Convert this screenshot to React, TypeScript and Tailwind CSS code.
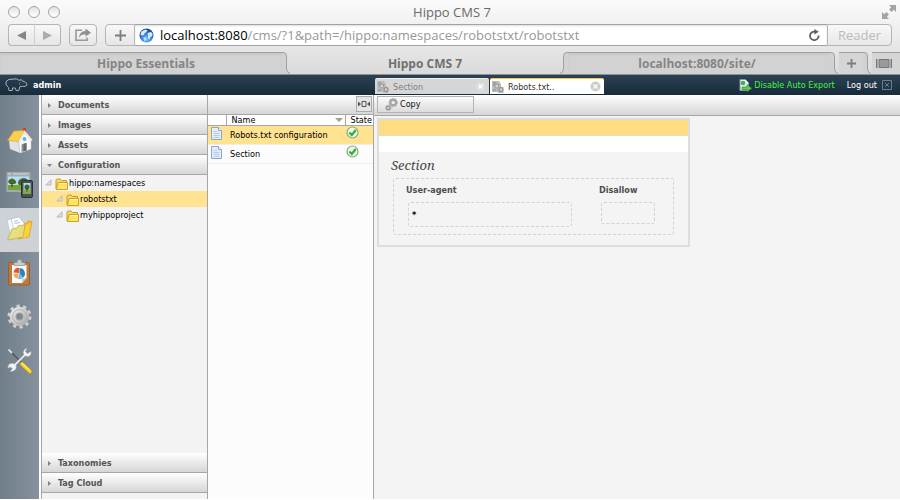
import React from "react";

const chromeFont = "font-['Open_Sans','Noto_Sans',sans-serif]";
const cmsFont = "font-['DejaVu_Sans_Condensed','DejaVu_Sans',sans-serif]";

/* ---------- browser window ---------- */

function ShareIcon() {
  return (
    <svg width="18" height="14" viewBox="0 0 18 14" fill="none" aria-hidden="true">
      <path d="M8 2.2H2v10h11V9.500" stroke="#999" strokeWidth="1.600" />
      <path d="M11.500 0.500L17 4.700L11.500 8.600V6.300C8.500 6.200 6.500 7.200 5 9.800C5.200 5.800 7.600 3.100 11.500 2.900Z" fill="#8f8f8f" />
    </svg>
  );
}

function GlobeIcon() {
  return (
    <svg width="15" height="15" viewBox="0 0 15 15" aria-hidden="true">
      <defs>
        <radialGradient id="globe" cx="0.5" cy="0.75" r="0.7">
          <stop offset="0" stopColor="#7cc6fb" />
          <stop offset="0.6" stopColor="#2f78d8" />
          <stop offset="1" stopColor="#173f8e" />
        </radialGradient>
      </defs>
      <circle cx="7.500" cy="7.500" r="7" fill="url(#globe)" />
      <path d="M2.500 3.500L6 1.500L8.500 2.300L7.300 4.300L5.500 5.200L4.800 7L3 7.400L1.500 6.500Z" fill="#d6ecff" />
      <path d="M8.600 5L12 4L13.800 6.200L12.600 8.400L11.300 9L10.400 11.600L8.800 9.500L9.200 7.500Z" fill="#d4ecff" />
      <path d="M4.500 9L7.300 9.700L6.800 12.300L5.400 13.200Z" fill="#bfe2fe" />
    </svg>
  );
}

function ToolbarButton({ label, className, children }: { label: string; className: string; children: React.ReactNode }) {
  return (
    <button
      type="button"
      aria-label={label}
      className={`flex h-[22px] items-center justify-center border border-[#b5b5b5] bg-gradient-to-b from-[#f8f8f8] to-[#e6e6e6] ${className}`}
    >
      {children}
    </button>
  );
}

function TabEdge({ flip = false }: { flip?: boolean }) {
  return (
    <svg width="9" height="22" viewBox="0 0 9 22" className={flip ? "-scale-x-100" : ""} aria-hidden="true">
      <path d="M0 0H1Q4.500 0.500 4.500 4V17Q4.500 20.500 8 22H0Z" fill="#d2d2d2" />
      <path d="M0 0.500H1Q4.500 0.500 4.500 4V17Q4.500 20.500 8 21.500" fill="none" stroke="#9f9f9f" />
    </svg>
  );
}

function BrowserChrome() {
  return (
    <div className={`${chromeFont} bg-gradient-to-b from-[#fbfbfb] via-[#ebebeb] to-[#dadada]`}>
      <div className="grid h-6 grid-cols-[1fr_auto_1fr] items-center pr-1 pl-2">
        <div className="flex gap-2">
          {["Close", "Minimize", "Zoom"].map((name) => (
            <button key={name} type="button" aria-label={name} className="size-3 rounded-full border border-[#a5a5a5] bg-gradient-to-b from-[#e2e2e2] to-white" />
          ))}
        </div>
        <h1 className="text-[13px] leading-6 text-[#6a6a6a]">Hippo CMS 7</h1>
        <button type="button" aria-label="Full screen" className="justify-self-end">
          <svg width="14" height="14" viewBox="0 0 14 14" fill="#a3a3a3">
            <path d="M7 0H14V7L11.800 4.800L9.500 7L7 4.600L9.200 2.300Z" />
            <path d="M0 7L2.200 9.200L4.400 7L7 9.500L4.800 11.700L7 14H0Z" />
          </svg>
        </button>
      </div>

      <div className="flex h-7 items-start px-2">
        <div className="flex">
          <ToolbarButton label="Back" className="w-[27px] rounded-l border-r-[#cfcfcf]">
            <svg width="9" height="9" viewBox="0 0 9 9"><path d="M0 4.500L9 0V9Z" fill="#858585" /></svg>
          </ToolbarButton>
          <ToolbarButton label="Forward" className="w-[26px] rounded-r border-l-0">
            <svg width="9" height="9" viewBox="0 0 9 9"><path d="M9 4.500L0 0V9Z" fill="#acacac" /></svg>
          </ToolbarButton>
        </div>
        <ToolbarButton label="Share" className="ml-2 w-7 rounded">
          <ShareIcon />
        </ToolbarButton>
        <ToolbarButton label="Add bookmark" className="ml-2 w-[30px] rounded-l">
          <svg width="11" height="11" viewBox="0 0 11 11"><path d="M5.500 0V11M0 5.500H11" stroke="#7c7c7c" strokeWidth="1.800" /></svg>
        </ToolbarButton>
        <div className="flex h-[22px] flex-1 items-center gap-1.5 border-y border-[#a2a2a2] bg-white pr-[7px] pl-1 shadow-[inset_0_1px_2px_#ddd]">
          <GlobeIcon />
          <p className="flex-1 text-[13px] leading-5 whitespace-nowrap text-[#979797]">
            <span className="text-black">localhost:8080</span>/cms/?1&amp;path=/hippo:namespaces/robotstxt/robotstxt
          </p>
          <button type="button" aria-label="Reload">
            <svg width="11" height="12" viewBox="0 0 11 12" fill="none">
              <path d="M9.600 6.500A4.300 4.300 0 1 1 6 2.600" stroke="#606060" strokeWidth="1.800" />
              <path d="M5.300 0L9.800 2.800L5.300 5.400Z" fill="#606060" />
            </svg>
          </button>
        </div>
        <button type="button" className="h-[22px] w-[65px] rounded-r border border-[#b5b5b5] bg-gradient-to-b from-[#f8f8f8] to-[#e8e8e8] text-[13px] leading-5 text-[#bcbcbc]">
          Reader
        </button>
      </div>

      <div className="flex h-[23px] border-b border-[#8f8f8f] text-[12px] leading-[21px] font-bold text-[#858585]">
        <div className="flex min-w-0 flex-[291]">
          <button type="button" className="min-w-0 flex-1 border-t border-[#9f9f9f] bg-[#d2d2d2] pl-2.5 shadow-[inset_0_2px_2px_#c8c8c8]">Hippo Essentials</button>
          <TabEdge />
        </div>
        <button type="button" className="min-w-0 flex-[268] text-[#707070]">Hippo CMS 7</button>
        <div className="flex min-w-0 flex-[280]">
          <TabEdge flip />
          <button type="button" className="min-w-0 flex-1 border-t border-[#9f9f9f] bg-[#d2d2d2] pr-1 shadow-[inset_0_2px_2px_#c8c8c8]">localhost:8080/site/</button>
          <TabEdge />
        </div>
        <button type="button" aria-label="New tab" className="flex w-6 items-center justify-center border-t border-[#9f9f9f] bg-[#d5d5d5]">
          <svg width="9" height="9" viewBox="0 0 9 9"><path d="M4.500 0V9M0 4.500H9" stroke="#7c7c7c" strokeWidth="1.800" /></svg>
        </button>
        <TabEdge />
        <button type="button" aria-label="Show all tabs" className="flex w-7 items-center justify-center border-t border-[#9f9f9f] bg-[#d5d5d5] pr-1">
          <svg width="16" height="9" viewBox="0 0 16 9"><path d="M0.700 0V9M15.300 0V9" stroke="#777" strokeWidth="1.400" /><path d="M3 0.500H13V8.500H3Z" fill="#999" stroke="#777" /></svg>
        </button>
      </div>
    </div>
  );
}

/* ---------- CMS header ---------- */

function GearsIcon() {
  return (
    <svg width="13" height="13" viewBox="0 0 13 13" fill="none" aria-hidden="true">
      <circle cx="8.200" cy="4.600" r="2.900" stroke="#a6a6a6" strokeWidth="2.400" />
      <circle cx="8.200" cy="4.600" r="4.200" stroke="#b0b0b0" strokeDasharray="1.600 1.400" />
      <circle cx="3.300" cy="9.800" r="1.800" stroke="#999" strokeWidth="1.600" />
      <circle cx="3.300" cy="9.800" r="2.800" stroke="#a8a8a8" strokeWidth="0.800" strokeDasharray="1.200 1" />
    </svg>
  );
}

function TemplateIcon() {
  return (
    <svg width="12" height="12" viewBox="0 0 12 12" aria-hidden="true">
      <path d="M0 0H7L9 3V11H0Z" fill="#bbb" />
      <path d="M1 2H4M1 4H6M1 9H4" stroke="#8c8c8c" />
      <circle cx="4.800" cy="5" r="2" fill="#d7d7d7" stroke="#939393" />
      <path d="M6 6H11.500V12H6Z" fill="#b5b5b5" />
      <circle cx="9" cy="8.500" r="2" fill="#ccc" stroke="#878787" />
    </svg>
  );
}

function EditorTab({ label, active = false }: { label: string; active?: boolean }) {
  return (
    <div
      className={`flex h-4 w-[114px] items-center gap-0.5 rounded-t-[2px] border-t px-0.5 ${
        active ? "border-[#f9c846] bg-white text-[#333]" : "border-[#eee] bg-[#d6d6d6] text-[#808080]"
      }`}
    >
      <TemplateIcon />
      <button type="button" className="flex-1 pl-0.5 text-left text-[9px] leading-[14px]">{label}</button>
      <button type="button" aria-label={`Close ${label}`} className="mr-px">
        <svg width="11" height="11" viewBox="0 0 11 11">
          <circle cx="5.500" cy="5.500" r="5" fill={active ? "#cdcdcd" : "#dcdcdc"} />
          <path d="M3.500 3.500L7.500 7.500M7.500 3.500L3.500 7.500" stroke="#fff" strokeWidth="1.200" />
        </svg>
      </button>
    </div>
  );
}

function CmsHeader() {
  return (
    <header className="flex h-5 bg-gradient-to-b from-[#2b4255] to-[#172b3b] text-white">
      <div className="flex w-[375px] items-center gap-[5px] pl-[5px]">
        <svg width="23" height="14" viewBox="0 0 23 14" fill="none" stroke="#a5b4c0" aria-hidden="true">
          <path d="M4 12.500L3.500 9.500Q0 7 1 3.700Q3 0.700 8 1.100Q12 0 14 2.300L16.500 1.700L17.200 2.900L20.500 4.300Q22.500 5.200 21.800 7.300Q20.500 9 17.500 8.300L14.800 8.700L13.800 12.600H11L10.500 10.200L7.600 9.900L7.200 12.600Z" />
          <path d="M15 4.500Q14 5.500 14.800 6.700M17.800 5H18.200" strokeWidth="0.700" />
        </svg>
        <span className="pt-px text-[9px] font-bold">admin</span>
      </div>
      <nav className="flex items-end gap-px pb-px" aria-label="Open editors">
        <EditorTab label="Section" />
        <EditorTab label="Robots.txt.." active />
      </nav>
      <div className="flex flex-1 items-center justify-end pr-2 text-[9px]">
        <svg width="13" height="13" viewBox="0 0 13 13" aria-hidden="true">
          <path d="M1 0.500H6.500L9.500 3.500V11.500H1Z" fill="#e8f1fb" stroke="#7a94b4" />
          <circle cx="4" cy="4" r="2.300" fill="#4aaf3d" />
          <path d="M3 8H8V5.700L12.800 9.300L8 12.800V10.500H3Z" fill="#5fcf45" stroke="#278c25" strokeWidth="0.700" />
        </svg>
        <button type="button" className="ml-0.5 pt-px text-[#3df53b]">Disable Auto Export</button>
        <button type="button" className="ml-3 pt-px">Log out</button>
        <button type="button" aria-label="Close" className="ml-[5px]">
          <svg width="10" height="10" viewBox="0 0 10 10" fill="none" stroke="#6c7f90"><path d="M0.500 0.500H9.500V9.500H0.500ZM3 3L7 7M7 3L3 7" /></svg>
        </button>
      </div>
    </header>
  );
}

/* ---------- perspective bar ---------- */

function HomeIcon() {
  return (
    <svg width="26" height="27" viewBox="0 0 26 27" aria-hidden="true">
      <path d="M16 1H19V9H16Z" fill="#df3a20" />
      <path d="M2 13L11 12L13 26L3 22Z" fill="#dfe2e6" />
      <path d="M11.500 14L17.500 5L24 13V22L13 26Z" fill="#f8f9fa" stroke="#c5cad0" strokeWidth="0.500" />
      <path d="M0.500 13.500L7 4L17.500 3.500L11 14.500Z" fill="#fbd04c" stroke="#d9a02a" strokeWidth="0.600" />
      <path d="M17.500 3.500L25.500 13L24.300 14L17.500 6L12.500 15L11 14.500Z" fill="#fffaf0" stroke="#c9b78a" strokeWidth="0.400" />
      <circle cx="17.500" cy="12" r="1.900" fill="#5bb0dd" />
      <path d="M14.600 17.200L19.500 16V23.500L14.600 25Z" fill="#8a8f94" />
      <path d="M16.500 16.800L19.500 16V23.500L16.500 24.300Z" fill="#666b70" />
    </svg>
  );
}

function ChannelsIcon() {
  return (
    <svg width="27" height="27" viewBox="0 0 27 27" aria-hidden="true">
      <rect x="0.500" y="1" width="24" height="20" rx="1" fill="#a4abb0" />
      <path d="M2 3H5M7 3H22" stroke="#d5d9dc" strokeWidth="1.200" />
      <path d="M2 5.500H23V19H2Z" fill="#b7dcf5" />
      <path d="M2 14H23V19H2Z" fill="#78a437" />
      <path d="M3 9Q6 6 9 9Q12 12 8 13H4Q1 11 3 9ZM13 9Q18 5 22 9V14H13Q11 12 13 9Z" fill="#3c6b2b" />
      <path d="M6 12V16M18 12V16" stroke="#48391f" strokeWidth="1.200" />
      <rect x="15.500" y="9.500" width="11" height="17" rx="1.500" fill="#4a5055" stroke="#2b3034" />
      <path d="M17.500 12H24.500V23H17.500Z" fill="#b3dbf5" />
      <path d="M17.500 18.500H24.500V23H17.500Z" fill="#82ae3b" />
      <circle cx="21" cy="16" r="2.600" fill="#376829" />
      <path d="M21 17V20.500" stroke="#48391f" />
    </svg>
  );
}

function ContentIcon() {
  return (
    <svg width="27" height="25" viewBox="0 0 27 25" aria-hidden="true">
      <path d="M16 8L21 7L22 5L26 5.500L23 21L12 23Z" fill="#f2b922" stroke="#d59b18" strokeWidth="0.600" />
      <path d="M1 4L10 2L15 16L4 18Z" fill="#f5f9fe" stroke="#a8bad0" strokeWidth="0.600" />
      <path d="M5 3L13 1L18 7L18 15L9 17Z" fill="#fff" stroke="#a8bad0" strokeWidth="0.600" />
      <path d="M8 5.500L12 4.500M8.500 7.500L14 6.500" stroke="#a9c3dd" />
      <path d="M2 22L6 13L11 12L12.500 9.500L19 9L17 21L2 24Z" fill="#e6de80" stroke="#b8ac36" strokeWidth="0.700" />
      <path d="M20 9L25 6.500L22.500 20.500L17 22Z" fill="#ffd03c" />
    </svg>
  );
}

function ReportsIcon() {
  return (
    <svg width="23" height="27" viewBox="0 0 23 27" aria-hidden="true">
      <rect x="0.500" y="3.500" width="21" height="22.500" rx="1" fill="#bd7a3c" stroke="#9a6130" />
      <path d="M4 6H18.500V19L14 24H4Z" fill="#fcfcfc" />
      <path d="M18.500 19L14 24L14 19.500Z" fill="#c9c9c9" />
      <path d="M6 6.500V3.500H9Q9 0.500 11.500 0.500Q14 0.500 14 3.500H17V6.500Z" fill="#c8cbce" stroke="#8a8e92" strokeWidth="0.700" />
      <path d="M11.500 14.500V9A5.500 5.500 0 0 1 15 18.700Z" fill="#2a87b5" />
      <path d="M11.500 14.500L15 18.700A5.500 5.500 0 0 1 10 19.800Z" fill="#70b5f5" />
      <path d="M11 14.500L9.500 19.800A5.500 5.500 0 0 1 5.500 14.500Z" fill="#f3a95b" />
      <path d="M11 14L5.500 13.500A5.500 5.500 0 0 1 11 8.700Z" fill="#e4572b" />
    </svg>
  );
}

function AdminIcon() {
  return (
    <svg width="25" height="25" viewBox="0 0 25 25" aria-hidden="true">
      <defs>
        <linearGradient id="gear" x1="0" y1="0" x2="1" y2="1">
          <stop offset="0" stopColor="#e6e6e6" />
          <stop offset="1" stopColor="#b0b0b0" />
        </linearGradient>
      </defs>
      <circle cx="12.500" cy="12.500" r="10.300" fill="none" stroke="#cfcfcf" strokeWidth="3.400" strokeDasharray="3.200 3.270" />
      <circle cx="12.500" cy="12.500" r="6.500" fill="none" stroke="url(#gear)" strokeWidth="6.400" />
      <circle cx="12.500" cy="12.500" r="7" fill="none" stroke="#a8a8a8" strokeWidth="0.800" />
      <circle cx="12.500" cy="12.500" r="3.600" fill="none" stroke="#979797" strokeWidth="0.900" />
    </svg>
  );
}

function SetupIcon() {
  return (
    <svg width="26" height="27" viewBox="0 0 26 27" fill="none" aria-hidden="true">
      <path d="M4 5L14 15" stroke="#4c5054" strokeWidth="1.300" />
      <path d="M1.500 2.500L5 6" stroke="#d9dce0" strokeWidth="1.800" />
      <path d="M15 17L23 24.500" stroke="#b08a10" strokeWidth="4.400" strokeLinecap="round" />
      <path d="M15 17L23 24.500" stroke="#fbd22c" strokeWidth="3.400" strokeLinecap="round" />
      <path d="M15.500 16.500L22.500 23" stroke="#fff0a0" />
      <path d="M20.500 1L18.500 4.200L20.500 6.500L24 4Q25 7.500 22.500 9.200Q20.500 10.300 18.300 9L9.300 18Q10.300 21.300 8 23.300Q5.500 25.300 2.500 24.300L5.300 22L3.700 20.200L0.800 21.500Q0.500 18 3 16.600Q5.300 15.600 7.500 16.700L16.500 8Q15.300 4.800 17.200 2.600Q18.500 1 20.500 1Z" fill="#f1f3f5" stroke="#83898f" strokeWidth="0.600" />
    </svg>
  );
}

const perspectives = [
  { name: "Home", Icon: HomeIcon },
  { name: "Channels", Icon: ChannelsIcon },
  { name: "Content", Icon: ContentIcon, active: true },
  { name: "Reports", Icon: ReportsIcon },
  { name: "Admin", Icon: AdminIcon },
  { name: "Setup", Icon: SetupIcon },
];

/* ---------- navigation column ---------- */

function SectionHeader({ label, open = false }: { label: string; open?: boolean }) {
  return (
    <button
      type="button"
      aria-expanded={open}
      className="flex h-5 w-full shrink-0 items-center gap-1.5 border-b border-[#a6a6a6] bg-gradient-to-b from-white to-[#d6d6d6] pt-0.5 pl-[5px] text-left text-[9px] font-bold text-[#555]"
    >
      <svg width="5" height="5" viewBox="0 0 5 5" className={open ? "rotate-90" : ""} aria-hidden="true">
        <path d="M1 0L4 2.500L1 5Z" fill="#808080" />
      </svg>
      {label}
    </button>
  );
}

function TreeNode({ label, selected = false, child = false }: { label: string; selected?: boolean; child?: boolean }) {
  return (
    <li className={`${child ? "pl-3.5" : "pl-[3px]"} ${selected ? "bg-[#ffe391]" : ""}`}>
      <button type="button" className="flex h-4 items-center pt-px text-[9px] text-black">
        <svg width="7" height="7" viewBox="0 0 7 7" className="mr-[3px] mb-0.5" aria-hidden="true"><path d="M6 0.800V6H0.800Z" fill="#dedede" stroke="#b8b8b8" /></svg>
        <svg width="14" height="12" viewBox="0 0 14 12" aria-hidden="true">
          <path d="M1 11V2.500Q1 1 2.500 1H5L6.500 2.500H11.500V11Z" fill="#f8d860" stroke="#c59a22" />
          <path d="M3 4.500H12.500V11.500H1.500Z" fill="#ffe461" stroke="#c9a22c" />
          <path d="M4 5.500H12" stroke="#fff7b8" />
        </svg>
        {label}
      </button>
    </li>
  );
}

function NavigationColumn() {
  return (
    <nav className="flex w-[167px] shrink-0 flex-col border-x border-[#a6a6a6] bg-[#f3f3f3]" aria-label="Content sections">
      <SectionHeader label="Documents" />
      <SectionHeader label="Images" />
      <SectionHeader label="Assets" />
      <SectionHeader label="Configuration" open />
      <ul className="flex-1">
        <TreeNode label="hippo:namespaces" />
        <TreeNode label="robotstxt" selected child />
        <TreeNode label="myhippoproject" child />
      </ul>
      <SectionHeader label="Taxonomies" />
      <SectionHeader label="Tag Cloud" />
      <div className="h-1.5" />
    </nav>
  );
}

/* ---------- document list ---------- */

function DocumentRow({ name, selected = false }: { name: string; selected?: boolean }) {
  return (
    <tr className={`h-[19px] border-b border-[#eee] ${selected ? "bg-[#ffe391]" : ""}`}>
      <td className="pl-[3px] align-top">
        <svg width="11" height="13" viewBox="0 0 11 13" className="mt-px block" aria-hidden="true">
          <path d="M0.500 0.500H7.500L10.500 3.500V12.500H0.500Z" fill="#e4eefb" stroke="#8ba6cb" />
          <path d="M7.500 0.500V3.500H10.500" fill="#fff" stroke="#8ba6cb" />
          <path d="M2.500 4.500H6M2.500 6.500H8.500M2.500 8.500H8.500M2.500 10.500H8.500" stroke="#b3cae8" />
        </svg>
      </td>
      <td className="pl-1">{name}</td>
      <td className="pl-px align-top">
        <svg width="13" height="13" viewBox="0 0 13 13" className="block" role="img" aria-label="Live">
          <circle cx="6.500" cy="6.500" r="5.500" fill="#eefaea" stroke="#86a880" strokeWidth="1.200" />
          <path d="M3.300 6.500L5.800 9L9.800 4" fill="none" stroke="#3fae36" strokeWidth="2.400" />
        </svg>
      </td>
    </tr>
  );
}

function DocumentList() {
  return (
    <section className="flex w-[166px] shrink-0 flex-col border-r border-[#a6a6a6] bg-[#fcfcfc]" aria-label="Documents">
      <div className="flex h-[19px] justify-end bg-gradient-to-b from-white to-[#d6d6d6] pr-px">
        <button type="button" aria-label="Expand list" className="mt-px flex h-4 w-4 items-center justify-center border border-[#aaa] bg-[#e5e5e5]">
          <svg width="12" height="6" viewBox="0 0 12 6"><path d="M0 0.500L3 3L0 5.500ZM12 0.500L9 3L12 5.500Z" fill="#555" /><path d="M4 0.500H8V5.500H4Z" fill="none" stroke="#555" /></svg>
        </button>
      </div>
      <table className="w-full table-fixed border-collapse text-[9px] leading-[10px] text-black">
        <colgroup>
          <col className="w-[18px]" />
          <col />
          <col className="w-[28px]" />
        </colgroup>
        <thead>
          <tr className="border-y border-[#a6a6a6] bg-white text-left">
            <th className="p-0" aria-label="Type" />
            <th className="border-x border-[#a6a6a6] p-0 font-normal">
              <button type="button" className="flex w-full items-center justify-between pr-0.5 pl-[5px]">
                Name
                <svg width="8" height="4" viewBox="0 0 8 4" aria-hidden="true"><path d="M0 0H8L4 4Z" fill="#a59f8e" /></svg>
              </button>
            </th>
            <th className="p-0 pl-[5px] font-normal">State</th>
          </tr>
        </thead>
        <tbody>
          <DocumentRow name="Robots.txt configuration" selected />
          <DocumentRow name="Section" />
        </tbody>
      </table>
    </section>
  );
}

/* ---------- editor ---------- */

function Editor() {
  return (
    <main className="min-w-0 flex-1 bg-[#f4f4f4]">
      <div className="flex h-[21px] items-start border-b border-[#a6a6a6] bg-gradient-to-b from-white to-[#d6d6d6] pt-px pl-[3px]">
        <button type="button" className="flex h-[17px] w-[97px] items-center gap-0.5 border border-[#b3b3b3] pl-[7px] text-[9px] text-[#111]">
          <GearsIcon />
          Copy
        </button>
      </div>
      <section className="mt-0.5 ml-[3px] w-[313px] border-2 border-[#ddd]">
        <div className="h-4 border-b border-[#e5dcc0] bg-[#ffdc82]" />
        <div className="h-4 bg-white" />
        <div className="px-3.5 pt-[5px] pb-2.5">
          <h2 className="-ml-0.5 font-['Noto_Serif','DejaVu_Serif',serif] text-[13px] leading-4 text-[#484848] italic">Section</h2>
          <div className="mt-[5px] grid h-[57px] w-[281px] grid-cols-[193px_1fr] rounded-[3px] border border-dashed border-[#d2d2d2] pt-1 pl-3">
            <div className="flex flex-col items-start">
              <label htmlFor="user-agent" className="text-[9px] leading-[14px] font-bold text-[#4d4d4d]">User-agent</label>
              <input id="user-agent" type="text" defaultValue="*" className="mt-[5px] ml-0.5 h-[25px] w-[164px] rounded-[3px] border border-dashed border-[#d2d2d2] px-[3px] text-[9px] font-bold text-black" />
            </div>
            <div className="flex flex-col items-start">
              <label htmlFor="disallow" className="text-[9px] leading-[14px] font-bold text-[#4d4d4d]">Disallow</label>
              <input id="disallow" type="text" className="mt-[5px] ml-0.5 h-[22px] w-[54px] rounded-[3px] border border-dashed border-[#d2d2d2] px-[3px] text-[9px] text-black" />
            </div>
          </div>
        </div>
      </section>
    </main>
  );
}

export default function App() {
  return (
    <div className="flex h-screen flex-col overflow-hidden bg-white pb-px">
      <BrowserChrome />
      <div className={`flex min-h-0 flex-1 flex-col ${cmsFont}`}>
        <CmsHeader />
        <div className="flex min-h-0 flex-1">
          <nav className="mr-0.5 flex w-[39px] shrink-0 flex-col bg-gradient-to-r from-[#717f8b] to-[#85929e] pt-[25px]" aria-label="Perspectives">
            {perspectives.map(({ name, Icon, active }) => (
              <button key={name} type="button" aria-label={name} className={`flex h-11 items-center justify-center pb-1 ${active ? "bg-[#ced2d6]" : ""}`}>
                <Icon />
              </button>
            ))}
          </nav>
          <NavigationColumn />
          <DocumentList />
          <Editor />
        </div>
      </div>
    </div>
  );
}
